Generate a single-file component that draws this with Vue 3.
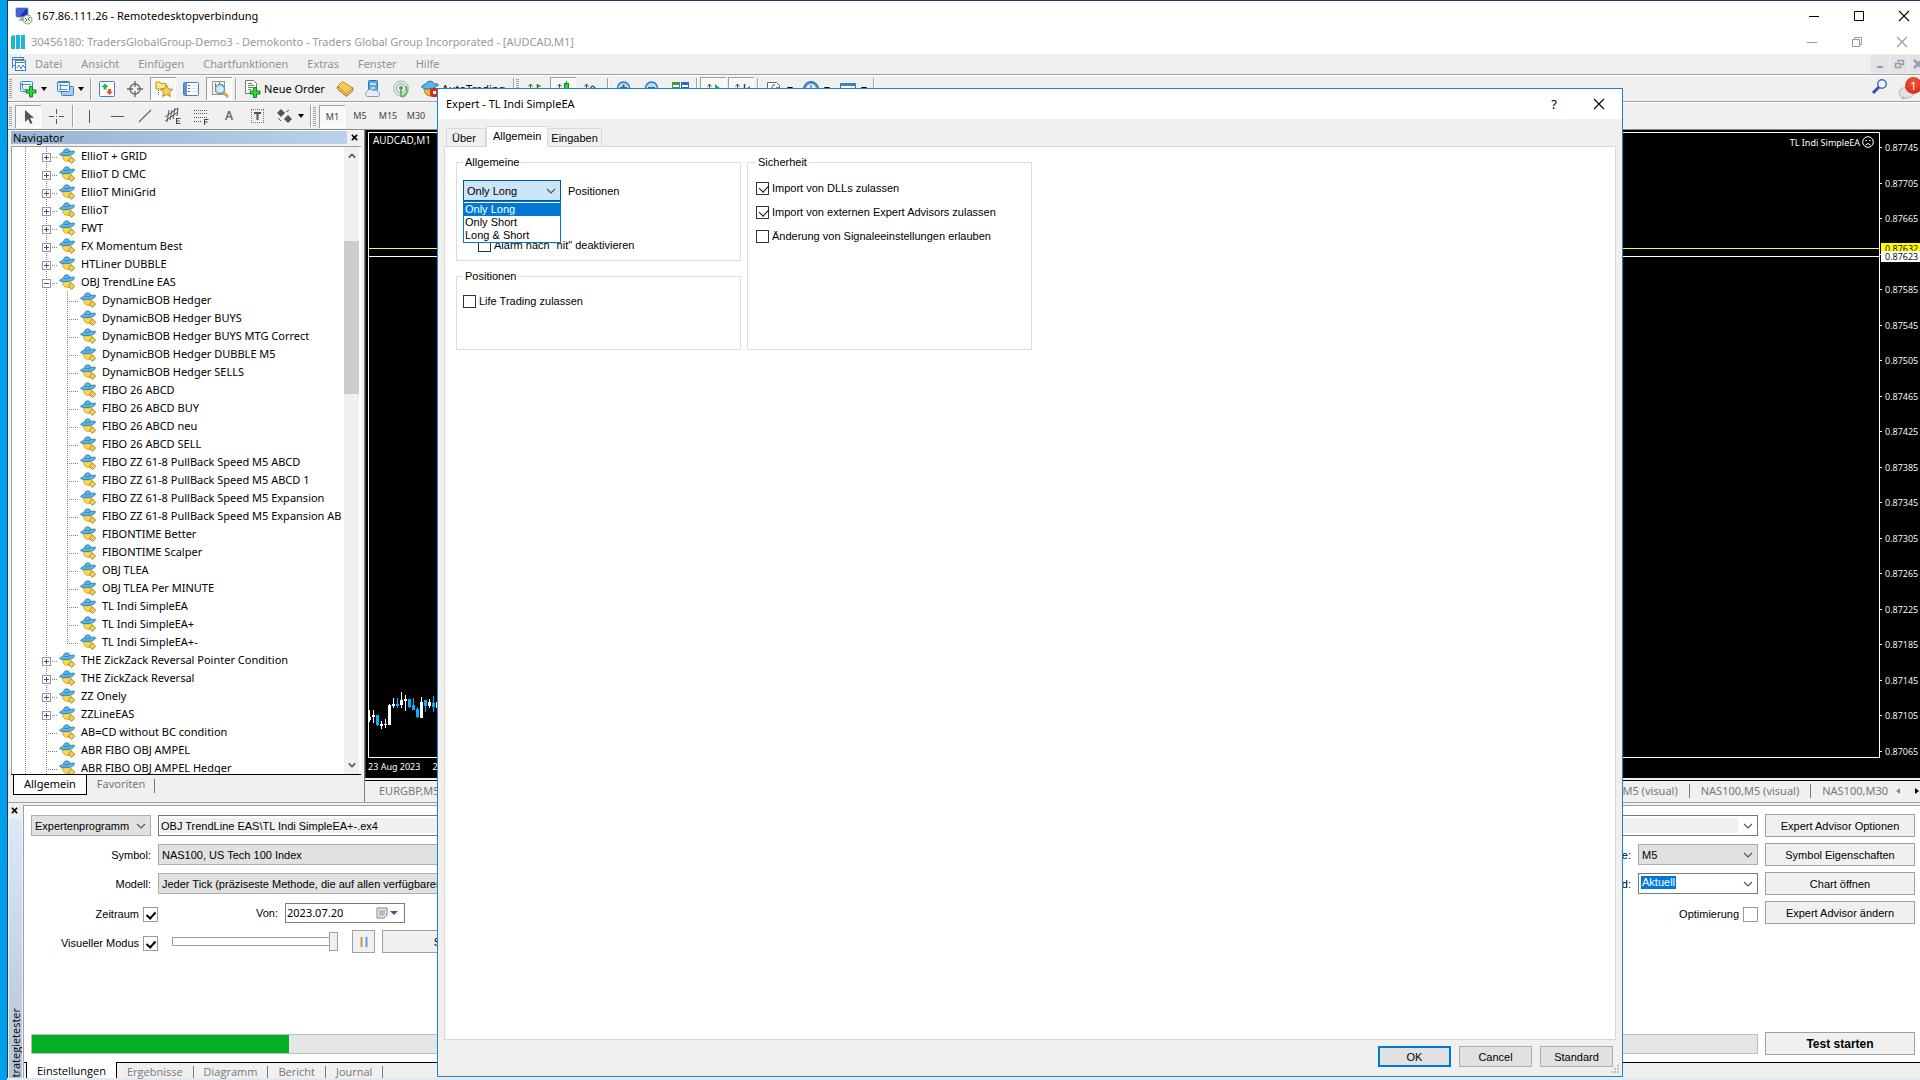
<script setup>
import { ref } from 'vue'

const menus = ['Datei', 'Ansicht', 'Einfügen', 'Chartfunktionen', 'Extras', 'Fenster', 'Hilfe']

const toolbar = [
  { icon: 'newchart', caret: true }, { icon: 'profiles', caret: true }, { sep: true },
  { icon: 'market' }, { icon: 'target' }, { icon: 'folderstar', on: true }, { icon: 'terminal' }, { icon: 'tester', on: true }, { sep: true },
  { icon: 'order', label: 'Neue Order', wide: 'order' },
  { icon: 'gold' }, { icon: 'cloud' }, { icon: 'signal' },
  { icon: 'auto', label: 'AutoTrading', wide: 'auto' }, { sep: true }, { grip: true },
  { icon: 'bars' }, { icon: 'candles', on: true }, { icon: 'linechart' }, { sep: true },
  { icon: 'zoomin' }, { icon: 'zoomout' }, { icon: 'tiles' }, { sep: true },
  { icon: 'scroll', on: true }, { icon: 'shift', on: true }, { sep: true },
  { icon: 'indicator', caret: true }, { icon: 'clock', caret: true }, { icon: 'template', caret: true }, { sep: true },
]

const drawbar = [
  { icon: 'cursor', on: true }, { icon: 'cross' }, { sep: true },
  { icon: 'vline' }, { icon: 'hline' }, { icon: 'diag' }, { icon: 'channel' }, { icon: 'fibo' },
  { text: 'A', big: true }, { icon: 'textbox' }, { icon: 'arrows', caret: true }, { sep: true }, { grip: true },
  { text: 'M1', on: true }, { text: 'M5' }, { text: 'M15' }, { text: 'M30' },
]

const kids = [
  'DynamicBOB Hedger', 'DynamicBOB Hedger BUYS', 'DynamicBOB Hedger BUYS MTG Correct', 'DynamicBOB Hedger DUBBLE M5',
  'DynamicBOB Hedger SELLS', 'FIBO 26 ABCD', 'FIBO 26 ABCD BUY', 'FIBO 26 ABCD neu', 'FIBO 26 ABCD SELL',
  'FIBO ZZ 61-8 PullBack Speed M5 ABCD', 'FIBO ZZ 61-8 PullBack Speed M5 ABCD 1', 'FIBO ZZ 61-8 PullBack Speed M5 Expansion',
  'FIBO ZZ 61-8 PullBack Speed M5 Expansion AB', 'FIBONTIME Better', 'FIBONTIME Scalper', 'OBJ TLEA', 'OBJ TLEA Per MINUTE',
  'TL Indi SimpleEA', 'TL Indi SimpleEA+', 'TL Indi SimpleEA+-',
]
const tree = [
  ...['EllioT + GRID', 'EllioT D CMC', 'EllioT MiniGrid', 'EllioT', 'FWT', 'FX Momentum Best', 'HTLiner DUBBLE'].map(t => ({ t, box: '+' })),
  { t: 'OBJ TrendLine EAS', box: '-' },
  ...kids.map((t, i) => ({ t, child: true, last: i === kids.length - 1 })),
  ...['THE ZickZack Reversal Pointer Condition', 'THE ZickZack Reversal', 'ZZ Onely', 'ZZLineEAS'].map(t => ({ t, box: '+' })),
  ...['AB=CD without BC condition', 'ABR FIBO OBJ AMPEL', 'ABR FIBO OBJ AMPEL Hedger'].map(t => ({ t })),
]

// the 0.87625 step lies under the bid and ask tags, so only its tick is drawn
const prices = Array.from({ length: 18 }, (_, i) => (i === 3 ? '' : (0.87745 - i * 0.0004).toFixed(5)))

// [centre x, wick top, wick bottom, body top, body bottom, falling]
const candles = [
  [1, 18, 30, 25, 28, 0], [5, 18, 31, 23, 25, 0], [9, 23, 34, 23, 33, 1], [13, 29, 37, 32, 34, 0], [17, 27, 36, 32, 33, 0],
  [21, 12, 33, 13, 33, 0], [25, 6, 16, 12, 14, 0], [29, 6, 16, 12, 14, 1], [33, 0, 16, 8, 13, 0], [37, 3, 19, 7, 9, 0],
  [41, 7, 16, 7, 15, 1], [45, 6, 18, 13, 18, 1], [49, 15, 26, 17, 25, 1], [53, 5, 26, 10, 26, 0], [57, 8, 20, 8, 14, 1],
  [61, 7, 16, 10, 14, 0], [65, 4, 20, 11, 15, 1], [69, 8, 18, 10, 16, 0],
]

const visual = ref(true)
const period = ref(true)
const optimise = ref(false)
const dll = ref(true)
const extern = ref(true)
const signals = ref(false)
const alarm = ref(false)
const life = ref(false)
const direction = ref('Only Long')
const directions = ['Only Long', 'Only Short', 'Long & Short']
const program = ref('OBJ TrendLine EAS\\TL Indi SimpleEA+-.ex4')
const from = ref('2023.07.20')
const speed = ref(100)
</script>

<template>
  <svg class="defs" width="0" height="0" aria-hidden="true">
    <symbol id="ea" viewBox="0 0 16 16">
      <path d="M3 7 Q4 14 9 13.500 Q12 13 12 8 Z" fill="#f6d84a" stroke="#c79a24" stroke-width=".7" />
      <path d="M.5 6.500 Q1 5 4 4.500 Q5 .8 7.500 .7 Q10.500 .8 11 3.500 Q15 2.500 15.500 3.500 Q15 7 9 7.500 Q3 8.500 .5 6.500Z" fill="#5cb4e4" stroke="#2779ab" stroke-width=".8" />
      <path d="M5 4.500 Q8 5.500 11 3.600" fill="none" stroke="#2779ab" stroke-width=".7" />
      <path d="M12.500 9 L15.700 12.200 L12.500 15.400 L9.300 12.200Z" fill="#f0cf53" stroke="#a67b1c" stroke-width=".9" />
    </symbol>
    <symbol id="newchart" viewBox="0 0 18 18">
      <rect x="1.500" y="1.500" width="12" height="10" rx="1" fill="#eaf4fd" stroke="#3d82c4" /><path d="M3.500 3v6M2 4.500h10M4 9.500h4" stroke="#5b8fc4" />
      <path d="M10.500 6.500h3v3.500h3.500v3h-3.500v4h-3v-4H7v-3h3.500z" fill="#2fd437" stroke="#138a1c" />
    </symbol>
    <symbol id="profiles" viewBox="0 0 18 18">
      <rect x="5.500" y="6.500" width="12" height="9" rx="1" fill="#a9cdee" stroke="#3d82c4" /><rect x="1.500" y="1.500" width="12" height="10" rx="1" fill="#eef6fd" stroke="#3d82c4" />
      <path d="M1.500 2.500h12" stroke="#3d82c4" /><path d="M4.500 4v6M3 5.500h9M3 9.500h8" stroke="#5b8fc4" />
    </symbol>
    <symbol id="market" viewBox="0 0 18 18">
      <rect x="1.500" y="1.500" width="15" height="15" rx="1" fill="#fff" stroke="#3d82c4" /><path d="M7 3.500L10.500 7H8.500v2.500H5.500V7H3.500z" fill="#26b534" /><path d="M11.500 15L8 11.500h2V9h3v2.500h2z" fill="#f0532b" />
    </symbol>
    <symbol id="target" viewBox="0 0 18 18"><circle cx="9" cy="9" r="5" fill="none" stroke="#666" stroke-width="1.300" /><path d="M9 1v6M9 11v6M1 9h6M11 9h6" stroke="#666" stroke-width="1.300" /></symbol>
    <symbol id="folderstar" viewBox="0 0 18 18">
      <path d="M1 2h4l1 1.500h5V9H1z" fill="#ffe884" stroke="#b99326" /><path d="M3.500 10v6" stroke="#666" stroke-dasharray="1 1" />
      <path d="M11.500 5l1.900 3.800 4.100.6-3 2.900.7 4.200-3.700-2-3.700 2 .7-4.200-3-2.900 4.100-.6z" fill="#fcd24e" stroke="#b8862a" />
    </symbol>
    <symbol id="terminal" viewBox="0 0 18 18"><rect x="1.500" y="2.500" width="15" height="13" rx="1" fill="#fff" stroke="#3d82c4" /><rect x="2" y="3" width="3" height="12" fill="#5d93cd" /><path d="M6 5.500h2M6 8.500h2M6 11.500h2" stroke="#4b6a8a" /><path d="M9 5.500h7M9 8.500h7M9 11.500h7" stroke="#dbe7f1" /></symbol>
    <symbol id="tester" viewBox="0 0 18 18">
      <rect x="1.500" y="1.500" width="12" height="13" fill="#f8f4e6" stroke="#9a958a" /><path d="M4.500 3v9M8.500 2v5M11.500 4v4" stroke="#777" />
      <path d="M12 12l5 5" stroke="#d8a33b" stroke-width="2.500" /><circle cx="9" cy="9" r="4.500" fill="#cfe5f8" fill-opacity=".85" stroke="#5b95cc" stroke-width="1.300" />
    </symbol>
    <symbol id="order" viewBox="0 0 18 18"><path d="M1.500 .5h8l3 3v10h-11z" fill="#fff" stroke="#777" /><path d="M4 3.500h4M4 5.500h6M4 7.500h5M4 9.500h3" stroke="#777" /><path d="M9.500 7.500h3v3.500h3.500v3h-3.500v3.500h-3V14H6v-3h3.500z" fill="#2fd437" stroke="#138a1c" /></symbol>
    <symbol id="gold" viewBox="0 0 18 18"><path d="M1.500 6.500l0 2.500 9 7.500 6.500-6V8z" fill="#b98418" stroke="#94640f" stroke-width=".8" /><path d="M1.500 6.500L6.500 1.500 17 8l-6.500 6z" fill="#f6cb52" stroke="#a8731a" stroke-width=".8" /><path d="M2 8l8.500 7L16.500 9.500" fill="none" stroke="#fff0b0" /></symbol>
    <symbol id="cloud" viewBox="0 0 18 18"><rect x="4.500" y=".5" width="9" height="10" rx="1" fill="#5aa7e6" stroke="#2d74b5" /><path d="M6 4h6M7 8h4" stroke="#e6f3fd" stroke-width="1.500" /><path d="M3 16.500a3 3 0 0 1 0-5 3.500 3.500 0 0 1 6-1 3.500 3.500 0 0 1 5 1.500 2.300 2.300 0 0 1 0 4.500z" fill="#e4eef8" stroke="#7b9cbd" /></symbol>
    <symbol id="signal" viewBox="0 0 18 18"><circle cx="9" cy="8.500" r="7.500" fill="#dce6e3" stroke="#a9bcb6" /><circle cx="9" cy="8.500" r="4.500" fill="#eef5f2" stroke="#7da3bd" /><circle cx="9" cy="8" r="2" fill="#4d9f49" /><path d="M9 9v8M10 17c5-2 6-6 4-11" stroke="#6cba60" stroke-width="2" fill="none" /></symbol>
    <symbol id="auto" viewBox="0 0 18 18"><path d="M3 8q0 8 7 8 5-2 4-8z" fill="#f0b73c" stroke="#b27c1c" /><path d="M.5 7Q2 4 5 4q1-3 4-3t4 3q4-1 4.500 1Q13 9 7 9 2 9 .5 7z" fill="#5cb4e4" stroke="#2779ab" /><rect x="9" y="8" width="9" height="9" rx="3" fill="#d92b1d" /><rect x="12" y="11" width="3" height="3" fill="#fff" /></symbol>
    <symbol id="bars" viewBox="0 0 18 18"><path d="M4.500 4v12M2.500 6.500L4.500 4l2 2.500" stroke="#555" fill="none" /><path d="M11.500 4v9M11.500 6h3M9 11h2.500" stroke="#128a1a" stroke-width="1.500" /></symbol>
    <symbol id="candles" viewBox="0 0 18 18"><path d="M4.500 4v12M2.500 6.500L4.500 4l2 2.500" stroke="#555" fill="none" /><path d="M11.500 1v14" stroke="#128a1a" /><rect x="9.500" y="3.500" width="4" height="8" fill="#35d33f" stroke="#128a1a" /></symbol>
    <symbol id="linechart" viewBox="0 0 18 18"><path d="M4.500 4v12M2.500 6.500L4.500 4l2 2.500" stroke="#555" fill="none" /><path d="M7 11q3-7 5-4t4 2" stroke="#128a1a" fill="none" stroke-width="1.500" /></symbol>
    <symbol id="zoomin" viewBox="0 0 18 18"><circle cx="8.500" cy="8" r="6" fill="#b9dcf5" stroke="#3377b5" stroke-width="1.500" /><path d="M8.500 4.500v7M5 8h7" stroke="#2e6ca8" stroke-width="2" /></symbol>
    <symbol id="zoomout" viewBox="0 0 18 18"><circle cx="8.500" cy="8" r="6" fill="#b9dcf5" stroke="#3377b5" stroke-width="1.500" /><path d="M5 8h7" stroke="#2e6ca8" stroke-width="2" /></symbol>
    <symbol id="tiles" viewBox="0 0 18 18"><rect x="1" y="2" width="8" height="7" fill="#3c9f3a" /><rect x="10" y="2" width="8" height="7" fill="#2f66cf" /><path d="M2 6h6M11 6h6" stroke="#fff" stroke-width="2" /><rect x="1" y="10" width="8" height="7" fill="#2f66cf" /><rect x="10" y="10" width="8" height="7" fill="#3c9f3a" /></symbol>
    <symbol id="scroll" viewBox="0 0 18 18"><path d="M4.500 4v12M2.500 6.500L4.500 4l2 2.500" stroke="#555" fill="none" /><path d="M10 4l6 5-6 4z" fill="#2cab35" /></symbol>
    <symbol id="shift" viewBox="0 0 18 18"><path d="M4.500 4v12M2.500 6.500L4.500 4l2 2.500" stroke="#555" fill="none" /><path d="M11.500 4v10" stroke="#444" stroke-width="1.500" /><path d="M17 6l-4 3 4 3z" fill="#b33a24" /></symbol>
    <symbol id="indicator" viewBox="0 0 18 18"><path d="M2.500 2.500h9l3 3v11h-12z" fill="#fff" stroke="#666" /><path d="M10 5q-3-1-3 3v6M5 9h5" stroke="#555" fill="none" /><path d="M11 7h3v3h3v3h-6z" fill="#2fb437" /></symbol>
    <symbol id="clock" viewBox="0 0 18 18"><circle cx="9" cy="9" r="7.500" fill="#4a98e0" stroke="#1f5f9f" /><circle cx="9" cy="9" r="5" fill="#eaf4fd" /><path d="M9 5v4h3" stroke="#345" fill="none" /></symbol>
    <symbol id="template" viewBox="0 0 18 18"><rect x="1.500" y="3.500" width="15" height="13" fill="#fff" stroke="#3d6fb4" /><path d="M1 4.500h16" stroke="#3d82c4" stroke-width="3" /><path d="M3 11l3-3 3 3 3-3 3 2" stroke="#a33" fill="none" /></symbol>
    <symbol id="cursor" viewBox="0 0 18 18"><path d="M5 2v12l3-3 2.500 5 2-1-2.500-5h4z" fill="#555" /></symbol>
    <symbol id="cross" viewBox="0 0 18 18"><path d="M9.500 2v5M9.500 12v5M2 9.500h5M12 9.500h5M9 9.500h1" stroke="#555" /></symbol>
    <symbol id="vline" viewBox="0 0 18 18"><path d="M9.500 3v13" stroke="#555" /></symbol>
    <symbol id="hline" viewBox="0 0 18 18"><path d="M3 9.500h13" stroke="#555" /></symbol>
    <symbol id="diag" viewBox="0 0 18 18"><path d="M3 15L15 3" stroke="#666" stroke-width="1.300" /></symbol>
    <symbol id="channel" viewBox="0 0 18 18"><path d="M1 10L14 1M1 14L14 5M5 3L3 15M8 3L6 13M11 1L9 12M14 1l-1 8" stroke="#555" /><path d="M12.500 11v6M12.500 11.500h4M12.500 14h3M12.500 16.500h4" stroke="#444" fill="none" /></symbol>
    <symbol id="fibo" viewBox="0 0 18 18"><path d="M2 3.500h14M2 6.500h14M2 10.500h14M2 14.500h8" stroke="#555" stroke-dasharray="1 1" /><path d="M12.500 12v6M12.500 12.500h4M12.500 15h3" stroke="#444" fill="none" /></symbol>
    <symbol id="textbox" viewBox="0 0 18 18"><path d="M3 2.500h13M3 15.500h13M3.500 3v13M15.500 3v13" stroke="#777" stroke-dasharray="1 1" /><path d="M6 6h7M9.500 5v8" stroke="#555" stroke-width="2" /></symbol>
    <symbol id="arrows" viewBox="0 0 18 18"><path d="M5 2l4 4-4 4-4-4zM12 8l4 4-4 4-4-4z" fill="#555" /><path d="M2 11l3 3M10 5l3-2" stroke="#555" fill="none" /></symbol>
    <symbol id="chev" viewBox="0 0 10 6"><path d="M1 1l4 4 4-4" fill="none" stroke="#555" stroke-width="1.200" /></symbol>
    <symbol id="x" viewBox="0 0 12 12"><path d="M1 1l10 10M11 1L1 11" stroke="currentColor" stroke-width="1.100" /></symbol>
  </svg>

  <div class="desktop">
    <div class="window">
      <header class="rdp">
        <svg class="i18" viewBox="0 0 18 18"><rect x="1" y="1" width="12" height="9" rx="1" fill="#1d33a8" stroke="#8b95a8" /><path d="M2 2l9 0-6 7H2z" fill="#3f63e8" /><path d="M5 11h4v3H4z" fill="#aab" /><circle cx="12.500" cy="12.500" r="4.500" fill="#e9efe6" stroke="#8d9a8a" /><path d="M10 11l2 2-2 2M15 10l-2 2 2 2" stroke="#369b31" fill="none" /></svg>
        <span class="grow">167.86.111.26 - Remotedesktopverbindung</span>
        <div class="sys">
          <button aria-label="Minimieren"><svg viewBox="0 0 12 12"><path d="M1 6.500h10" stroke="#000" /></svg></button>
          <button aria-label="Maximieren"><svg viewBox="0 0 12 12"><path d="M1.500 1.500h9v9h-9z" fill="none" stroke="#000" /></svg></button>
          <button aria-label="Schließen"><svg viewBox="0 0 12 12"><use href="#x" /></svg></button>
        </div>
      </header>
      <header class="app">
        <svg class="logo" viewBox="0 0 14 16"><path d="M0 2l4-1v14H0zM5 1h4v14H5zM10 1h4v14h-4z" fill="#1fb6d6" /></svg>
        <span class="grow">30456180: TradersGlobalGroup-Demo3 - Demokonto - Traders Global Group Incorporated - [AUDCAD,M1]</span>
        <div class="sys dim">
          <button aria-label="App minimieren"><svg viewBox="0 0 12 12"><path d="M1 6.500h10" stroke="#999" /></svg></button>
          <button aria-label="App verkleinern"><svg viewBox="0 0 12 12"><path d="M1.500 3.500h7v7h-7zM3.500 3v-1.500h7v7H9" fill="none" stroke="#999" /></svg></button>
          <button aria-label="App schließen"><svg viewBox="0 0 12 12"><use href="#x" /></svg></button>
        </div>
      </header>
      <nav class="menu">
        <svg class="menuicon" viewBox="0 0 14 14"><rect x="3.500" y="3.500" width="10" height="10" fill="#fff" stroke="#3d82c4" /><path d="M.5 11V.5h11V3M.5 2.500h11M.5 8.500h3M4 5.500h9" fill="none" stroke="#3d82c4" /><path d="M5 11l2-3 2 4 2-4 2 3" stroke="#3d82c4" fill="none" /></svg>
        <a v-for="m in menus" :key="m" href="#">{{ m }}</a>
        <span class="grow"></span>
        <button class="mdi" aria-label="Chart minimieren"><svg viewBox="0 0 12 12"><path d="M3 9h6" stroke="#8fa0b5" stroke-width="2" /></svg></button>
        <button class="mdi" aria-label="Chart wiederherstellen"><svg viewBox="0 0 12 12"><path d="M2.500 5.500h5v4h-5zM5 4V2.500h5.500v4H8" fill="none" stroke="#8fa0b5" stroke-width="1.500" /></svg></button>
        <button class="mdi cut" aria-label="Chart schließen"><svg viewBox="0 0 12 12"><path d="M2 2l8 8M10 2l-8 8" stroke="#8fa0b5" stroke-width="2.500" /></svg></button>
      </nav>

      <div class="bars">
        <div class="bar">
          <i class="grip"></i>
          <template v-for="(b, i) in toolbar" :key="i">
            <i v-if="b.sep" class="sep"></i>
            <i v-else-if="b.grip" class="grip"></i>
            <button v-else class="tb" :class="[{ on: b.on, drop: b.caret }, b.wide]" :aria-label="b.label || b.icon">
              <svg class="i18"><use :href="'#' + b.icon" /></svg><span v-if="b.label">{{ b.label }}</span><i v-if="b.caret" class="caret"></i>
            </button>
          </template>
          <span class="grow"></span>
          <button class="search" aria-label="Suchen"><svg class="i18" viewBox="0 0 18 18"><circle cx="11" cy="6" r="4.300" fill="#f3f8ff" stroke="#3a6bd0" stroke-width="1.500" /><path d="M8 9l-6 6" stroke="#2c54b8" stroke-width="3" /></svg></button>
          <button class="chat" aria-label="Nachrichten"><svg viewBox="0 0 20 20"><ellipse cx="8" cy="12" rx="8" ry="6" fill="#e2e2e2" stroke="#aaa" /><path d="M3 16v4l5-3z" fill="#bbb" /></svg><b>1</b></button>
        </div>
        <div class="bar second">
          <i class="grip"></i>
          <template v-for="(b, i) in drawbar" :key="i">
            <i v-if="b.sep" class="sep"></i>
            <i v-else-if="b.grip" class="grip"></i>
            <button v-else class="tb" :class="{ on: b.on, drop: b.caret, big: b.big }" :aria-label="b.text || b.icon">
              <svg v-if="b.icon" class="i18"><use :href="'#' + b.icon" /></svg><span v-if="b.text" class="tf">{{ b.text }}</span><i v-if="b.caret" class="caret"></i>
            </button>
          </template>
        </div>
      </div>

      <div class="work">
        <aside class="navi">
          <div class="navihead"><span>Navigator</span><button aria-label="Navigator schließen"><svg viewBox="0 0 8 8"><path d="M1 1l6 6M7 1L1 7" stroke="#000" stroke-width="1.800" /></svg></button></div>
          <div class="treebox">
            <ul class="tree">
              <li v-for="n in tree" :key="n.t" :class="{ child: n.child, last: n.last }">
                <i class="g"></i>
                <i class="g" :class="{ arm: !n.child }"><b v-if="n.box" :class="{ plus: n.box === '+' }"></b></i>
                <i v-if="n.child" class="g arm"></i>
                <svg class="i16"><use href="#ea" /></svg><span>{{ n.t }}</span>
              </li>
            </ul>
            <div class="scroll"><svg viewBox="0 0 10 6"><path d="M1 5l4-4 4 4" fill="none" stroke="#555" stroke-width="2" /></svg><i class="thumb"></i><svg viewBox="0 0 10 6"><path d="M1 1l4 4 4-4" fill="none" stroke="#555" stroke-width="2" /></svg></div>
          </div>
          <div class="navitabs"><button class="sel">Allgemein</button><button>Favoriten</button></div>
        </aside>

        <section class="charts">
          <div class="chart">
            <div class="plot">
              <span class="sym">AUDCAD,M1</span>
              <span class="ea">TL Indi SimpleEA <svg viewBox="0 0 12 12"><circle cx="6" cy="6" r="5.300" fill="none" stroke="#fff" /><path d="M3.500 4.500h1.500M7 4.500h1.500M3.500 9q2.500-3 5 0" stroke="#fff" fill="none" /></svg></span>
              <i class="ask"></i><i class="bid"></i>
              <svg class="candles" viewBox="0 0 72 40">
                <g v-for="c in candles" :key="c[0]" :fill="c[5] ? '#00b4ff' : '#fff'">
                  <rect :x="c[0] - 1" :y="c[1]" width="1" :height="c[2] - c[1]" /><rect :x="c[0] - 2" :y="c[3]" width="3" :height="c[4] - c[3]" />
                </g>
              </svg>
            </div>
            <div class="axis">
              <span v-for="(p, i) in prices" :key="i">{{ p }}</span>
              <b class="tagask">0.87632</b><b class="tagbid">0.87623</b>
            </div>
            <div class="time"><span>23 Aug 2023</span><span>23 Aug 00:17</span></div>
          </div>
          <div class="charttabs">
            <a href="#">EURGBP,M5 (visual)</a><span class="grow"></span><a href="#">NAS100,M5 (visual)</a><a href="#">NAS100,M5 (visual)</a><a href="#">NAS100,M30</a>
            <i class="left"></i><i class="right"></i>
          </div>
        </section>
      </div>

      <section class="tester">
        <div class="side"><button aria-label="Tester schließen"><svg viewBox="0 0 8 8"><path d="M1 1l6 6M7 1L1 7" stroke="#000" stroke-width="1.800" /></svg></button><div class="cap"><span>Strategietester</span></div></div>
        <div class="body">
          <form class="form" @submit.prevent>
            <div class="row">
              <div class="combo lead"><select aria-label="Testart"><option>Expertenprogramm</option></select><svg><use href="#chev" /></svg></div>
              <div class="combo edit grow"><input v-model="program" aria-label="Programm" /><svg><use href="#chev" /></svg></div>
              <button class="btn">Expert Advisor Optionen</button>
            </div>
            <div class="row">
              <label class="lead" for="symbol">Symbol:</label>
              <div class="combo grow"><select id="symbol"><option>NAS100, US Tech 100 Index</option></select></div>
              <label class="mid" for="periode">Periode:</label>
              <div class="combo lead"><select id="periode"><option>M5</option></select><svg><use href="#chev" /></svg></div>
              <button class="btn">Symbol Eigenschaften</button>
            </div>
            <div class="row">
              <label class="lead" for="modell">Modell:</label>
              <div class="combo grow"><select id="modell"><option>Jeder Tick (präziseste Methode, die auf allen verfügbaren kleineren Zeiteinheiten basiert)</option></select></div>
              <label class="mid" for="spread">Spread:</label>
              <div class="combo lead white"><select id="spread"><option>Aktuell</option></select><mark>Aktuell</mark><svg><use href="#chev" /></svg></div>
              <button class="btn">Chart öffnen</button>
            </div>
            <div class="row">
              <label class="tick">Zeitraum<input v-model="period" type="checkbox" /></label>
              <label class="von" for="von">Von:</label>
              <div class="date"><input id="von" v-model="from" /><svg viewBox="0 0 12 12"><path d="M1 1h10v7l-3 3H1z" fill="#e6e6ee" stroke="#86808a" /><path d="M3 4h6M3 6h6M3 8h5M4 3v6M6 3v6M8 3v5" stroke="#aab" /></svg><i class="bluecaret"></i></div>
              <span class="grow"></span>
              <label class="tick opt">Optimierung<input v-model="optimise" type="checkbox" /></label>
              <button class="btn">Expert Advisor ändern</button>
            </div>
            <div class="row">
              <label class="tick">Visueller Modus<input v-model="visual" type="checkbox" /></label>
              <input v-model="speed" class="range" type="range" aria-label="Geschwindigkeit" />
              <button class="btn pause" aria-label="Pause"><svg viewBox="0 0 8 10"><path d="M1.500 0v10" stroke="#e0903a" stroke-width="2" /><path d="M6.500 0v10" stroke="#5a9fdc" stroke-width="2" /></svg></button>
              <button class="btn skip">Springe zu</button>
            </div>
            <div class="row end">
              <div class="progress grow"><i></i></div>
              <button class="btn strong">Test starten</button>
            </div>
          </form>
          <div class="testtabs"><i class="stub"></i><button class="sel">Einstellungen</button><button>Ergebnisse</button><button>Diagramm</button><button>Bericht</button><button>Journal</button></div>
        </div>
      </section>
    </div>

    <div class="dialog" role="dialog" aria-label="Expert - TL Indi SimpleEA">
      <header><span class="grow">Expert - TL Indi SimpleEA</span><button aria-label="Hilfe" class="help">?</button><button aria-label="Dialog schließen"><svg viewBox="0 0 12 12"><use href="#x" /></svg></button></header>
      <div class="tabs"><button>Über</button><button class="sel">Allgemein</button><button>Eingaben</button></div>
      <div class="page">
        <div class="col">
          <fieldset class="general">
            <legend>Allgemeine</legend>
            <div class="pick">
              <div class="combo open"><select id="dir" v-model="direction"><option v-for="d in directions" :key="d">{{ d }}</option></select><svg><use href="#chev" /></svg>
                <ul class="list" role="listbox"><li v-for="d in directions" :key="d" role="option" :class="{ cur: d === direction }" @click="direction = d">{{ d }}</li></ul>
              </div>
              <label for="dir">Positionen</label>
            </div>
            <label class="check in"><input v-model="alarm" type="checkbox" />Alarm nach "hit" deaktivieren</label>
          </fieldset>
          <fieldset class="pos">
            <legend>Positionen</legend>
            <label class="check"><input v-model="life" type="checkbox" />Life Trading zulassen</label>
          </fieldset>
        </div>
        <fieldset class="safe">
          <legend>Sicherheit</legend>
          <label class="check"><input v-model="dll" type="checkbox" />Import von DLLs zulassen</label>
          <label class="check"><input v-model="extern" type="checkbox" />Import von externen Expert Advisors zulassen</label>
          <label class="check"><input v-model="signals" type="checkbox" />Änderung von Signaleeinstellungen erlauben</label>
        </fieldset>
      </div>
      <footer>
        <button class="dbtn def">OK</button><button class="dbtn">Cancel</button><button class="dbtn">Standard</button>
        <svg class="size" viewBox="0 0 8 8"><path d="M6 0h2v2H6zM3 3h2v2H3zM6 3h2v2H6zM0 6h2v2H0zM3 6h2v2H3zM6 6h2v2H6z" fill="#bfbfbf" /></svg>
      </footer>
    </div>
  </div>
</template>

<style>
body { margin: 0; overflow: hidden; }
</style>

<style scoped>
* { box-sizing: border-box; }
button { font: inherit; color: inherit; background: none; border: 0; padding: 0; margin: 0; white-space: nowrap; }
input, select { font: inherit; color: inherit; margin: 0; }
a { color: inherit; text-decoration: none; }
ul { list-style: none; margin: 0; padding: 0; }
.defs { position: absolute; }
.grow { flex: 1; min-width: 0; }
.i18 { width: 18px; height: 18px; flex: none; }
.i16 { width: 16px; height: 16px; flex: none; }

.desktop { position: relative; height: 100vh; padding: 0 0 2px 7px; background: linear-gradient(90deg, #00a0ea, #00aaf2); font: 11px/16px "Noto Sans", "Open Sans", sans-serif; color: #000; overflow: hidden; }
.window { display: flex; flex-direction: column; height: 100%; border: solid #1b3a60; border-width: 1px 0 0 1px; background: #f0f0f0; box-shadow: 0 2px #e3e9f1; }

.rdp { display: flex; align-items: center; height: 29px; padding-left: 7px; background: #fff; gap: 3px; }
.app { display: flex; align-items: center; height: 24px; padding-left: 3px; background: #fff; color: #999; gap: 6px; }
.logo { width: 14px; height: 16px; }
.sys { display: flex; padding-right: 1px; }
.sys button { width: 45px; height: 22px; display: flex; align-items: center; justify-content: center; }
.sys svg { width: 12px; height: 12px; color: #000; }
.sys button:last-child { width: 30px; margin-left: 8px; }
.sys.dim { padding-right: 3px; }
.sys.dim svg { color: #999; }

.menu { display: flex; align-items: center; height: 21px; padding-left: 4px; border-bottom: 1px solid #a0a0a0; box-shadow: 0 1px #fff; color: #909090; gap: 19px; }
.menuicon { width: 14px; height: 14px; margin-right: -10px; }
.mdi { width: 18px; height: 18px; background: #e3e3e3; margin-right: -18px; }
.mdi svg { width: 12px; height: 12px; display: block; margin: 3px; }
.mdi.cut { width: 11px; margin-right: 0; }

.bars { border-bottom: 1px solid #888; flex: none; padding-top: 1px; }
.bar { display: flex; align-items: center; height: 26px; padding-left: 1px; border-bottom: 1px solid #a0a0a0; }
.bar.second { border: 0; border-top: 1px solid #fff; height: 27px; }
.grip { width: 3px; height: 19px; margin-right: 2px; background: repeating-linear-gradient(#a5a5a5 0 1px, #f0f0f0 1px 2px); }
.sep { width: 1px; height: 22px; margin: 0 2px; background: #a0a0a0; box-shadow: 1px 0 #fff; }
.tb { width: 28px; height: 23px; display: flex; align-items: center; justify-content: center; flex: none; }
.tb.drop { width: 37px; gap: 4px; }
.tb.on { width: 26px; margin: 0 1px; background: #f8f8f8; border: solid #a0a0a0; border-width: 1px 0 0 1px; box-shadow: inset -1px -1px #fff; }
.tb.order { width: 93px; gap: 2px; }
.tb.auto { width: 96px; gap: 3px; }
.tf { font-size: 9px; color: #444; }
.big .tf { font-size: 12px; font-weight: 600; color: #666; }
.caret { border: 3px solid transparent; border-top: 4px solid #000; border-bottom: 0; }
.chat { position: relative; width: 29px; height: 23px; }
.chat svg { width: 18px; height: 18px; position: absolute; left: 8px; top: 5px; }
.chat b { position: absolute; left: 14px; top: 0; width: 17px; height: 17px; border-radius: 50%; background: radial-gradient(circle at 50% 30%, #f0553c, #cf2415); color: #fff; font: 11px/17px "Noto Sans", sans-serif; }
.search { margin-right: 2px; }

.work { flex: 1; min-height: 0; display: flex; }
.navi { width: 356px; flex: none; display: flex; flex-direction: column; padding: 1px 3px 6px 3px; box-shadow: inset 0 1px #fff; }
.navihead { display: flex; height: 15px; flex: none; line-height: 13px; }
.navihead span { flex: 1; height: 13px; padding-left: 2px; background: linear-gradient(90deg, #99b4d1, #b9d1ea); }
.navihead button { width: 14px; height: 13px; }
.navihead svg, .side svg { width: 7px; height: 7px; display: block; margin: 3px auto; }
.treebox { flex: 1; min-height: 0; display: flex; background: #fff; border: solid #a0a0a0; border-width: 1px 0 0 1px; }
.tree { flex: 1; min-width: 0; overflow: hidden; padding-left: 3px; }
.tree li { display: flex; align-items: center; height: 18px; white-space: nowrap; line-height: 18px; }
.g { position: relative; width: 21px; height: 18px; flex: none; }
.g::before { content: ""; position: absolute; left: 10px; top: 0; width: 1px; height: 18px; background: repeating-linear-gradient(#808080 0 1px, #fff 1px 2px); }
.g.arm::after { content: ""; position: absolute; left: 10px; top: 10px; width: 11px; height: 1px; background: repeating-linear-gradient(90deg, #808080 0 1px, #fff 1px 2px); }
.last .g:last-of-type::before { height: 10px; }
.g b { position: absolute; z-index: 1; left: 6px; top: 6px; width: 9px; height: 9px; border: 1px solid #969696; background: linear-gradient(#3553a0, #3553a0) center / 5px 1px no-repeat #fff; }
.g b.plus { background: linear-gradient(#3553a0, #3553a0) center / 5px 1px no-repeat, linear-gradient(#3553a0, #3553a0) center / 1px 5px no-repeat #fff; }
.tree .i16 { margin: 0 6px 0 2px; }
.scroll { width: 17px; flex: none; background: #f0f0f0; display: flex; flex-direction: column; border-right: 2px solid #fff; }
.scroll svg { width: 8px; height: 6px; margin: 6px auto; flex: none; }
.scroll .thumb { flex: none; height: 153px; margin: 76px 0 auto; background: #cdcdcd; }
.navitabs { display: flex; border-top: 1px solid #000; padding-left: 2px; color: #777; height: 22px; flex: none; }
.navitabs button { height: 20px; padding: 0 10px 3px; line-height: 17px; background: linear-gradient(#777, #777) right 4px / 1px 14px no-repeat; }
.navitabs .sel { background: #fff; border: 1px solid #000; border-top: 0; color: #000; padding-bottom: 2px; }

.charts { flex: 1; min-width: 0; display: flex; flex-direction: column; border-left: 1px solid #808080; padding-bottom: 1px; }
.chart { flex: 1; min-height: 0; display: grid; grid-template: 1fr 20px / 1fr 40px; background: #000; padding: 2px 0 0 2px; color: #fff; font-size: 10px; line-height: 13px; border-left: 1px solid #333; }
.plot { position: relative; border: 1px solid #fff; }
.sym { position: absolute; left: 4px; top: 1px; font-family: "Open Sans", sans-serif; }
.ea { position: absolute; right: 5px; top: 3px; display: flex; gap: 2px; font-size: 9px; }
.ea svg { width: 12px; height: 12px; }
.ask, .bid { position: absolute; left: 0; right: 0; top: 115px; height: 1px; background: #ff0; }
.bid { top: 123px; background: #fff; }
.candles { position: absolute; left: 0; top: 559px; width: 72px; height: 40px; }
.axis { position: relative; display: flex; flex-direction: column; justify-content: space-between; padding: 9px 0 0; font-size: 9px; font-family: "Open Sans", sans-serif; }
.axis span { display: flex; align-items: center; gap: 3px; height: 13px; }
.axis span::before { content: ""; width: 2px; height: 1px; background: #fff; }
.axis b { position: absolute; left: 1px; right: 0; top: 111px; height: 11px; padding-left: 4px; font-weight: 400; line-height: 11px; background: #ff0; color: #000; }
.axis b.tagbid { top: 119px; background: #fff; }
.time { grid-column: 1 / 3; display: flex; gap: 12px; padding-top: 2px; white-space: nowrap; font-size: 9px; }
.charttabs { display: flex; align-items: center; height: 21px; margin-top: 2px; border-top: 1px solid #000; color: #777; padding-left: 3px; white-space: nowrap; }
.charttabs a { padding: 0 11px; border-right: 1px solid #777; line-height: 14px; }
.charttabs a:last-of-type { border: 0; padding-right: 8px; }
.charttabs i { border: 3px solid transparent; }
.charttabs .left { border-right: 4px solid #888; margin-right: 15px; border-left: 0; }
.charttabs .right { border-left: 4px solid #000; border-right: 0; margin-right: 1px; }

.tester { display: flex; flex: none; border-top: 1px solid #a0a0a0; padding-top: 2px; font-family: "Liberation Sans", Arial, sans-serif; }
.side { width: 15px; flex: none; display: flex; flex-direction: column; }
.side button { height: 14px; }
.side svg { margin: 2px 3px 5px; }
.cap { flex: 1; margin: 0 1px; background: linear-gradient(#dbe9f7, #b3c4d6); position: relative; overflow: hidden; font-family: "Open Sans", sans-serif; }
.cap span { position: absolute; left: 0; top: 189px; writing-mode: vertical-rl; transform: rotate(180deg); line-height: 13px; }
.body { flex: 1; min-width: 0; background: #fff; border: solid #a0a0a0; border-width: 1px 0 0 1px; }
.form { padding: 5px 5px 6px 7px; }
.row { display: flex; align-items: center; gap: 7px; height: 29px; }
.row.end { margin-top: 75px; height: 25px; }
.lead { width: 120px; flex: none; }
label.lead, .mid { text-align: right; }
.mid { width: 60px; }
.combo { position: relative; height: 21px; background: #e1e1e1; border: 1px solid #adadad; }
.combo select, .combo input { appearance: none; width: 100%; height: 100%; display: block; border: 0; padding: 0 3px; background: none; outline: 0; border-radius: 0; }
.combo > svg { position: absolute; right: 4px; top: 7px; width: 10px; height: 6px; pointer-events: none; }
.combo.edit { background: #fff; border-color: #7a7a7a; padding: 2px 19px 2px 1px; }
.combo.edit input { background: #f0f0f0; padding: 0 1px; }
.combo.white { background: #fff; border-color: #7a7a7a; }
mark { position: absolute; left: 2px; top: 2px; background: #0078d7; color: #fff; line-height: 13px; pointer-events: none; padding: 0 1px; }
.btn { width: 150px; height: 23px; flex: none; border: 1px solid #a0a0a0; background: #f0f0f0; text-align: center; }
.btn.strong { font-weight: 700; font-size: 12px; }
.tick { width: 127px; display: flex; align-items: center; justify-content: flex-end; gap: 4px; padding-top: 3px; }
.tick input, .check input { appearance: none; position: relative; width: 15px; height: 15px; margin: 0; border: 1px solid #999; background: #fff; flex: none; }
.tick input:checked::after, .check input:checked::after { content: ""; position: absolute; left: 4px; top: 2px; width: 4px; height: 7px; border: solid #000; border-width: 0 2px 2px 0; transform: rotate(42deg); }
.von { width: 113px; text-align: right; }
.date { display: flex; align-items: center; width: 120px; height: 20px; border: 1px solid #7a7a7a; padding-right: 6px; gap: 2px; font-family: "Noto Sans", sans-serif; }
.date input { border: 0; height: 16px; padding: 0 1px; background: none; flex: 1; min-width: 0; }
.date svg { width: 12px; height: 12px; }
.bluecaret { border: 4px solid transparent; border-top: 4px solid #3c5a8c; border-bottom: 0; }
.range { appearance: none; width: 166px; height: 19px; margin: 0 7px; background: linear-gradient(#a0a0a0, #a0a0a0) 0 5px / 100% 1px no-repeat, linear-gradient(#a0a0a0, #a0a0a0) 0 13px / 100% 1px no-repeat, linear-gradient(#a0a0a0, #a0a0a0) 0 5px / 1px 9px no-repeat; }
.range::-webkit-slider-thumb { appearance: none; width: 9px; height: 19px; border: 1px solid #a0a0a0; background: #f0f0f0; border-radius: 0; }
.pause { width: 23px; }
.pause svg { width: 8px; height: 10px; display: block; margin: auto; }
.skip { width: 156px; }
.progress { height: 20px; background: #e6e6e6; border: 1px solid #bcbcbc; }
.progress i { display: block; width: 257px; height: 100%; background: #06b025; }
.testtabs { display: flex; height: 16px; border-top: 1px solid #000; background: #f0f0f0; color: #777; font-family: "Open Sans", sans-serif; line-height: 16px; }
.testtabs .stub { width: 3px; border-right: 1px solid #000; }
.testtabs button { padding: 0 10px; height: 12px; margin-top: 3px; line-height: 12px; border-right: 1px solid #777; }
.testtabs .sel { height: 16px; margin: -1px 0 0; padding-bottom: 1px; background: #fff; color: #000; border-color: #000; padding-top: 3px; }

.dialog { position: absolute; left: 437px; right: 297px; top: 88px; bottom: 3px; display: flex; flex-direction: column; border: 1px solid #1883d7; background: #f0f0f0; font-family: "Liberation Sans", Arial, sans-serif; padding: 0 6px; }
.dialog header { display: flex; align-items: center; height: 30px; margin: 0 -6px; padding: 0 8px; background: #fff; flex: none; font-family: "Noto Sans", sans-serif; }
.dialog header button { width: 30px; height: 28px; }
.dialog header .help { margin-right: 15px; font-size: 13px; }
.dialog header svg { width: 12px; height: 12px; display: block; margin: auto; }
.tabs { display: flex; align-items: flex-end; height: 27px; padding-left: 2px; flex: none; }
.tabs button { height: 18px; border: 1px solid #d9d9d9; border-bottom: 0; padding: 0 3px 0 5px; min-width: 40px; text-align: left; }
.tabs button + button + button { border-left: 0; padding-left: 3px; }
.tabs .sel { background: #fff; height: 21px; margin-bottom: -1px; padding: 0 6px 3px; position: relative; border-right: 1px solid #d9d9d9; }
.page { flex: 1; min-height: 0; display: flex; align-items: flex-start; gap: 6px; background: #fff; border: 1px solid #d9d9d9; padding: 8px 11px; }
.col { display: flex; flex-direction: column; }
fieldset { width: 285px; margin: 0; border: 1px solid #dcdcdc; padding: 0 6px; }
legend { padding: 0 2px; height: 14px; line-height: 15px; }
.general { height: 106px; margin-bottom: 8px; }
.pos { height: 81px; }
.safe { height: 195px; padding-left: 8px; }
.pick { display: flex; align-items: center; gap: 7px; margin-top: 11px; }
.combo.open { width: 98px; background: #cce4f7; border-color: #005499; }
.list { position: absolute; z-index: 2; left: -1px; right: -1px; top: 20px; border: 1px solid #0078d7; background: #fff; line-height: 13px; padding-top: 1px; }
.list li { padding-left: 1px; }
.list .cur { background: #0078d7; color: #fff; }
.check { display: flex; align-items: center; gap: 3px; height: 24px; }
.check input { width: 13px; height: 13px; border-color: #333; }
.check input:checked::after { left: 4px; top: 0; border-width: 0 1px 1px 0; width: 5px; height: 8px; }
.check.in { margin: 32px 0 0 15px; }
.pos .check { margin-top: 6px; }
.safe .check:nth-child(2) { margin-top: 7px; }
footer { position: relative; display: flex; justify-content: flex-end; gap: 8px; height: 36px; padding: 6px 3px 0; flex: none; }
.dbtn { width: 73px; height: 21px; background: #e1e1e1; border: 1px solid #adadad; }
.dbtn.def { border: 2px solid #0078d7; }
.size { position: absolute; right: -3px; bottom: 3px; width: 8px; height: 8px; }
</style>
